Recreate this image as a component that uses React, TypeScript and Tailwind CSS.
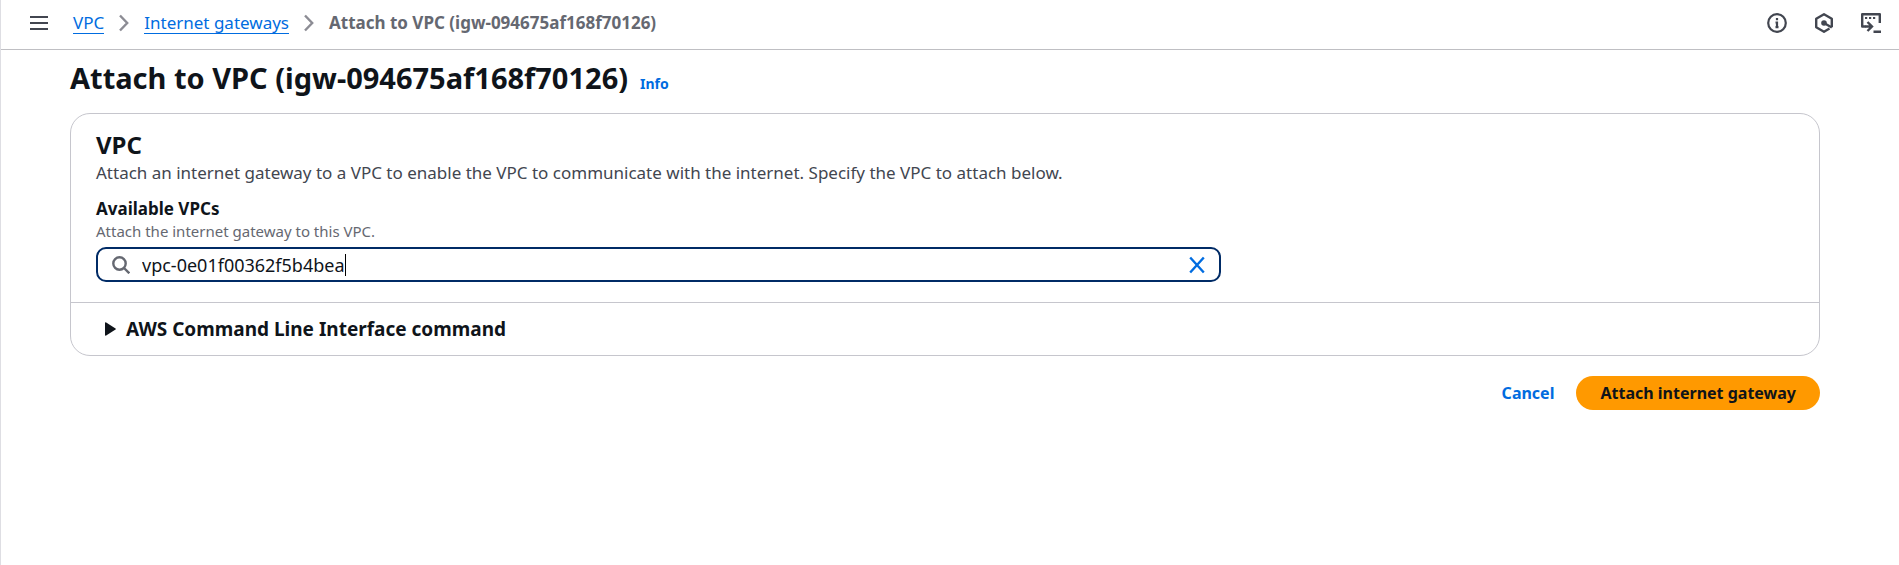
import { useState } from "react";

function MenuIcon() {
  return (
    <svg width="18" height="18" viewBox="0 0 18 18" fill="none" stroke="currentColor" strokeWidth="2" aria-hidden="true">
      <path d="M0 3h18M0 9h18M0 15h18" />
    </svg>
  );
}

function ChevronIcon() {
  return (
    <svg width="10" height="18" viewBox="0 0 10 18" fill="none" stroke="#8c8c94" strokeWidth="2.400" aria-hidden="true">
      <path d="M1 1.500 8.200 9 1 16.500" />
    </svg>
  );
}

function InfoIcon() {
  return (
    <svg width="20" height="20" viewBox="0 0 20 20" fill="none" stroke="currentColor" strokeWidth="2.200" aria-hidden="true">
      <circle cx="10" cy="10" r="8.800" />
      <path d="M10 5v2.200M8.500 9.500H10v5M8.500 14.200h3" />
    </svg>
  );
}

function HexagonIcon() {
  return (
    <svg width="20" height="20" viewBox="0 0 20 20" fill="none" stroke="currentColor" strokeWidth="2.400" strokeLinejoin="round" aria-hidden="true">
      <path d="M17.800 14.200V5.800L10 1.300 2.200 5.800v8.400L10 18.700l5.500-3.200" />
      <path d="M10 10l7.800 4.500" />
      <circle cx="10" cy="10" r="2.800" fill="currentColor" stroke="none" />
    </svg>
  );
}

function ShellIcon() {
  return (
    <svg width="20" height="20" viewBox="0 0 20 20" fill="none" stroke="currentColor" strokeWidth="2.400" aria-hidden="true">
      <path d="M4.500 13.500H1.200V1.200h17.600v8.800" strokeLinejoin="round" />
      <path d="M4 5h2.200M8 5h2.200M12 5h2.200" strokeWidth="2" />
      <path d="M4 13.500h7M6.500 9l4.500 4.500L6.500 18M12.500 18.800H20" />
    </svg>
  );
}

function SearchIcon() {
  return (
    <svg width="18" height="18" viewBox="0 0 18 18" fill="none" stroke="#656871" strokeWidth="2.400" aria-hidden="true">
      <circle cx="7.500" cy="7.500" r="6.200" />
      <path d="M12 12l5.300 5.300" />
    </svg>
  );
}

function CloseIcon() {
  return (
    <svg width="16" height="18" viewBox="0 0 16 18" fill="none" stroke="currentColor" strokeWidth="2.400" aria-hidden="true">
      <path d="M1.200 1.500l13.600 15M14.800 1.500l-13.600 15" />
    </svg>
  );
}

function Header() {
  return (
    <header className="flex h-[50px] items-center border-b border-[#bfbfc3] pr-[18px] pl-[29px] pb-[3px] text-[#424650]">
      <button type="button" aria-label="Open navigation" className="mr-[25px]">
        <MenuIcon />
      </button>
      <nav aria-label="Breadcrumbs" className="flex-1">
        <ol className="flex items-center gap-[15px] text-[17px] leading-5">
          <li className="flex items-center gap-[15px]">
            <a href="#vpc" className="border-b border-[#006ce0] text-[#006ce0]">VPC</a>
            <ChevronIcon />
          </li>
          <li className="flex items-center gap-[15px]">
            <a href="#internet-gateways" className="border-b border-[#006ce0] text-[#006ce0]">Internet gateways</a>
            <ChevronIcon />
          </li>
          <li aria-current="page" className="font-bold text-[#656871]">Attach to VPC (igw-094675af168f70126)</li>
        </ol>
      </nav>
      <div className="flex gap-[27px]">
        <button type="button" aria-label="Information"><InfoIcon /></button>
        <button type="button" aria-label="Amazon Q"><HexagonIcon /></button>
        <button type="button" aria-label="CloudShell"><ShellIcon /></button>
      </div>
    </header>
  );
}

export default function App() {
  const [vpc, setVpc] = useState("vpc-0e01f00362f5b4bea");

  return (
    <div className="min-h-screen border-l border-[#dedee3] bg-white font-['Noto_Sans',sans-serif] text-[#0f141a]">
      <Header />
      <main className="pt-2.5 pr-[79px] pl-[69px]">
        <div className="flex items-baseline gap-3">
          <h1 className="text-[29px] leading-9 font-bold">Attach to VPC (igw-094675af168f70126)</h1>
          <a href="#info" className="text-sm font-bold text-[#006ce0]">Info</a>
        </div>

        <form onSubmit={(event) => event.preventDefault()}>
          <section className="mt-[17px] rounded-[20px] border border-[#c6c6cd]">
            <div className="px-[25px] pt-[18px] pb-5">
              <h2 className="mb-[3px] text-2xl leading-[26px] font-bold">VPC</h2>
              <p className="text-[17px] leading-6 text-[#424650]">
                Attach an internet gateway to a VPC to enable the VPC to communicate with the internet. Specify the VPC to attach below.
              </p>
              <label htmlFor="available-vpcs" className="mt-3 block text-[17px] leading-6 font-bold">Available VPCs</label>
              <p id="vpc-hint" className="text-[15px] leading-5 text-[#656871]">Attach the internet gateway to this VPC.</p>
              <div className="mt-1.5 grid grid-cols-3 gap-5">
                <div className="col-span-2 flex h-[35px] items-center rounded-[10px] border-2 border-[#002b66] px-3.5">
                  <SearchIcon />
                  <input
                    id="available-vpcs"
                    type="text"
                    aria-describedby="vpc-hint"
                    value={vpc}
                    onChange={(event) => setVpc(event.target.value)}
                    className="ml-3 text-lg leading-6 caret-transparent outline-none [field-sizing:content]"
                  />
                  <span className="h-[22px] w-px bg-black" />
                  <button type="button" aria-label="Clear" onClick={() => setVpc("")} className="ml-auto text-[#006ce0]">
                    <CloseIcon />
                  </button>
                </div>
              </div>
            </div>
            <details className="border-t border-[#c6c6cd]">
              <summary className="flex h-[52px] cursor-pointer list-none items-center gap-2.5 pl-[34px] text-[19px] font-bold">
                <svg width="11" height="14" viewBox="0 0 11 14" fill="currentColor" aria-hidden="true">
                  <path d="M1.200.500 10.500 6.400q.8.600 0 1.200L1.200 13.500Q0 14 0 13V1Q0 0 1.200.500Z" />
                </svg>
                AWS Command Line Interface command
              </summary>
            </details>
          </section>

          <div className="mt-5 flex items-center justify-end gap-[22px] text-base font-bold">
            <a href="#cancel" className="text-[#006ce0]">Cancel</a>
            <button type="submit" className="h-[34px] rounded-full bg-[#ff9900] px-6">Attach internet gateway</button>
          </div>
        </form>
      </main>
    </div>
  );
}
